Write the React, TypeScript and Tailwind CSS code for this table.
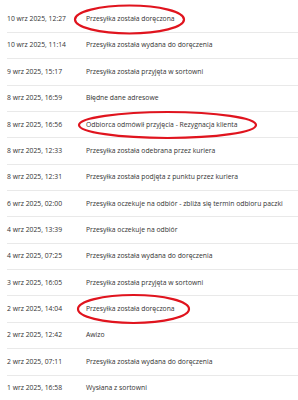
const rows: [string, string][] = [
  ['10 wrz 2025, 12:27', 'Przesyłka została doręczona'],
  ['10 wrz 2025, 11:14', 'Przesyłka została wydana do doręczenia'],
  ['9 wrz 2025, 15:17', 'Przesyłka została przyjęta w sortowni'],
  ['8 wrz 2025, 16:59', 'Błędne dane adresowe'],
  ['8 wrz 2025, 16:56', 'Odbiorca odmówił przyjęcia - Rezygnacja klienta'],
  ['8 wrz 2025, 12:33', 'Przesyłka została odebrana przez kuriera'],
  ['8 wrz 2025, 12:31', 'Przesyłka została podjęta z punktu przez kuriera'],
  ['6 wrz 2025, 02:00', 'Przesyłka oczekuje na odbiór - zbliża się termin odbioru paczki'],
  ['4 wrz 2025, 13:39', 'Przesyłka oczekuje na odbiór'],
  ['4 wrz 2025, 07:25', 'Przesyłka została wydana do doręczenia'],
  ['3 wrz 2025, 16:05', 'Przesyłka została przyjęta w sortowni'],
  ['2 wrz 2025, 14:04', 'Przesyłka została doręczona'],
  ['2 wrz 2025, 12:42', 'Awizo'],
  ['2 wrz 2025, 07:11', 'Przesyłka została wydana do doręczenia'],
  ['1 wrz 2025, 16:58', 'Wysłana z sortowni'],
];

// hand-drawn red marks over the screenshot
const marks = [
  { cx: 129.5, cy: 19.5, rx: 54.5, ry: 14 },
  { cx: 167.5, cy: 125, rx: 88.5, ry: 13 },
  { cx: 133.5, cy: 309, rx: 55.5, ry: 14 },
];

export default function App() {
  return (
    <div className="relative w-[298px] h-[400px] overflow-hidden bg-white font-['Open_Sans',sans-serif] text-[#333]">
      <div className="pt-[6.5px] pl-[7px]">
        {rows.map(([date, status], i) => (
          <div
            key={i}
            className="flex items-center h-[26.36px] border-b border-[#e9e9e9] text-[6.8px] whitespace-nowrap"
          >
            <span className="w-[79px] shrink-0">{date}</span>
            <span>{status}</span>
          </div>
        ))}
      </div>
      <svg className="absolute inset-0 pointer-events-none" width="298" height="400">
        {marks.map((m, i) => (
          <ellipse
            key={i}
            cx={m.cx}
            cy={m.cy}
            rx={m.rx}
            ry={m.ry}
            fill="none"
            stroke="#e0141e"
            strokeWidth="2.2"
          />
        ))}
      </svg>
    </div>
  );
}
